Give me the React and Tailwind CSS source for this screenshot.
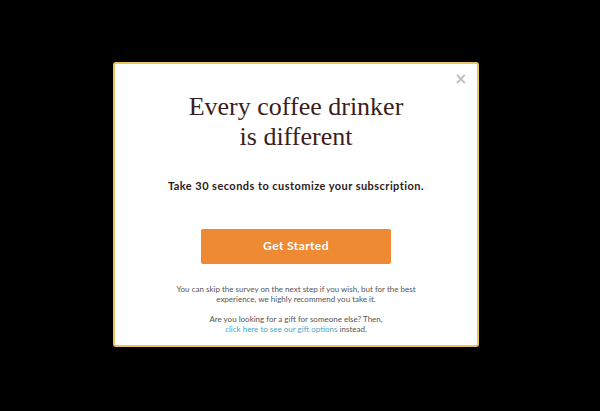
export default function App() {
    return (
        <div className="w-[600px] h-[411px] bg-black pt-[62px] pl-[113px]">
            <div className="relative w-[366px] h-[285px] bg-white border-2 border-[#e8c65c] rounded-[3px] flex flex-col items-center text-center">
                {/* close button */}
                <button className="absolute top-[8px] right-[10px] text-[#bdbdbd] text-[15px] font-bold leading-none font-['DejaVu_Sans',sans-serif]">
                    ×
                </button>

                <h1 className="mt-[28px] font-['Liberation_Serif',serif] text-[26px] leading-[30px] text-[#3b1d1d]">
                    Every coffee drinker
                    <br />
                    is different
                </h1>

                <p className="mt-[26px] font-['Lato',sans-serif] font-bold text-[11px] tracking-[0.45px] text-[#2b1a1a]">
                    Take 30 seconds to customize your subscription.
                </p>

                <button className="mt-[34px] w-[190px] h-[35px] bg-[#ef8a34] rounded-[2px] text-white font-['Lato',sans-serif] font-bold text-[12px] tracking-[0.4px]">
                    Get Started
                </button>

                <p className="mt-[20px] font-['Lato',sans-serif] text-[8px] leading-[10px] text-[#555]">
                    You can skip the survey on the next step if you wish, but for the best
                    <br />
                    experience, we highly recommend you take it.
                </p>

                <p className="mt-[10px] font-['Lato',sans-serif] text-[8px] leading-[10px] text-[#555]">
                    Are you looking for a gift for someone else? Then,
                    <br />
                    <a className="text-[#49a6cc]">click here to see our gift options</a> instead.
                </p>
            </div>
        </div>
    );
}
